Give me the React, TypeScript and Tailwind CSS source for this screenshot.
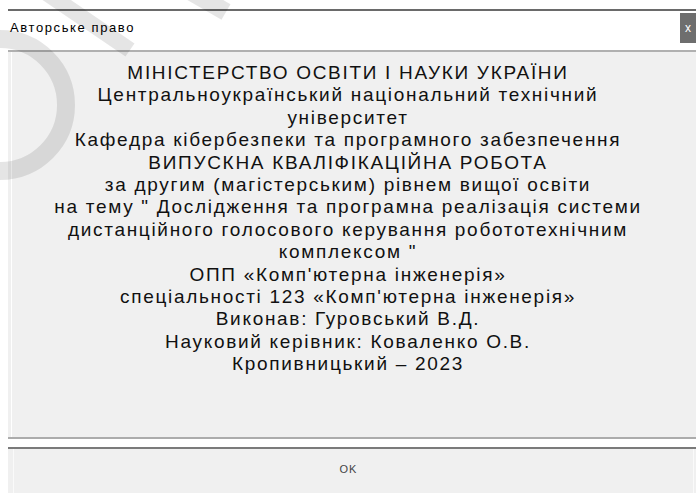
import React from "react";

const lines = [
  "МІНІСТЕРСТВО ОСВІТИ І НАУКИ УКРАЇНИ",
  "Центральноукраїнський національний технічний",
  "університет",
  "Кафедра кібербезпеки та програмного забезпечення",
  "ВИПУСКНА КВАЛІФІКАЦІЙНА РОБОТА",
  "за другим (магістерським) рівнем вищої освіти",
  "на тему \" Дослідження та програмна реалізація системи",
  "дистанційного голосового керування робототехнічним",
  "комплексом \"",
  "ОПП «Комп'ютерна інженерія»",
  "спеціальності 123 «Комп'ютерна інженерія»",
  "Виконав: Гуровський В.Д.",
  "Науковий керівник: Коваленко О.В.",
  "Кропивницький – 2023",
];

export default function App() {
  return (
    <div
      className="relative w-[696px] h-[493px] overflow-hidden bg-white"
      style={{ fontFamily: '"Liberation Sans", Arial, sans-serif' }}
    >
      <div className="pt-[9px] pl-[8px] h-full">
        <div className="flex flex-col h-full bg-[#f0f0f0]">
          {/* title bar */}
          <div className="h-[2px] bg-[#6a6a6a]" />
          <div className="flex items-center justify-between h-[38px] bg-white">
            <span className="pl-[2px] pb-[4px] text-[13px] tracking-[1.6px] text-black">Авторське право</span>
            <div className="flex items-center justify-center w-[16px] h-[30px] bg-[#6e6e6e] text-white text-[12px] self-start mt-[2px]">
              x
            </div>
          </div>
          <div className="h-[1px] bg-white" />
          <div className="h-[2px] bg-[#b0b0b0]" />

          {/* dialog body */}
          <div className="flex-1 flex flex-col pl-[3px]">
            <div className="flex flex-col items-center h-[385px] border-l border-white pt-[10px] pr-[12px] text-[19px] leading-[22.4px] tracking-[1.7px] text-[#111]">
              {lines.map((t, i) => (
                <div key={i} className="whitespace-pre">{t}</div>
              ))}
            </div>
          </div>
          <div className="h-[2px] bg-[#acacac]" />
          <div className="h-[8px] bg-white" />
          <div className="h-[2px] bg-[#7a7a7a]" />
          <div className="flex-1 flex pl-[5px] pr-[2px]">
            <div className="flex-1 flex justify-center border-l border-r border-[#fafafa] pt-[12px] pr-[10px] text-[11px] tracking-[1px] text-[#444]">
              OK
            </div>
          </div>
        </div>
      </div>

      {/* watermark strokes */}
      <svg
        className="absolute inset-0 pointer-events-none"
        width="696"
        height="493"
        viewBox="0 0 696 493"
        fill="none"
      >
        <g stroke="rgba(0,0,0,0.1)" strokeLinecap="butt">
          <line x1="45" y1="-8" x2="130" y2="50" strokeWidth="16" />
          <line x1="188" y1="-10" x2="226" y2="12" strokeWidth="18" />
          <circle cx="0" cy="105" r="66" strokeWidth="18" />
        </g>
      </svg>
    </div>
  );
}
